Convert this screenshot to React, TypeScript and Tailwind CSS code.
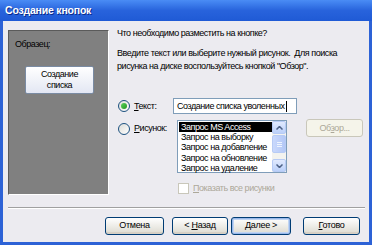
import React from "react";

const font = "font-['Liberation_Sans',Arial,sans-serif]";

const Radio = ({ checked }: { checked?: boolean }) => (
  <span className="flex h-[12px] w-[12px] items-center justify-center rounded-full border border-[#1c5180] bg-gradient-to-br from-[#dcdcd7] to-white">
    {checked && <span className="h-[6px] w-[6px] rounded-full bg-gradient-to-br from-[#5cd35c] to-[#1e961e]" />}
  </span>
);

const XpButton = ({
  children,
  width,
  isDefault,
}: {
  children: React.ReactNode;
  width: string;
  isDefault?: boolean;
}) => (
  <button
    className={`${width} h-[18px] whitespace-nowrap rounded-[3px] border border-[#003c74] bg-gradient-to-b from-white to-[#dcdad0] text-[9px] tracking-[-0.3px] text-black ${
      isDefault ? "shadow-[inset_0_0_0_1px_#98b8ea,inset_0_0_0_2px_#c0d4f2]" : "shadow-[inset_0_-2px_0_#d6d0c5]"
    }`}
  >
    {children}
  </button>
);

const items = [
  "Запрос MS Access",
  "Запрос на выборку",
  "Запрос на добавление",
  "Запрос на обновление",
  "Запрос на удаление",
];

export default function App() {
  return (
    <div className={`${font} flex h-[245px] w-[372px] flex-col overflow-hidden whitespace-nowrap bg-[#2d62d6] px-[3px] pb-[3px] text-black`}>
      {/* TITLE BAR */}
      <div className="-mx-[3px] flex h-[21px] items-center bg-gradient-to-b from-[#4a8cf5] via-[#2863dc] to-[#1f5ad5] px-[5px]">
        <span className="text-[10.5px] font-bold tracking-[-0.2px] text-white [text-shadow:1px_1px_0_#0a2a8a]">Создание кнопок</span>
      </div>

      {/* BODY */}
      <div className="flex flex-1 flex-col bg-[#ecebf0] text-[9px] tracking-[-0.45px]">
        <div className="flex pl-[5px] pt-[6px]">
          {/* Sample panel */}
          <div className="mt-[3px] flex h-[165px] w-[101px] shrink-0 flex-col border border-b-white border-l-[#5a5a5a] border-r-white border-t-[#5a5a5a] bg-[#808080]">
            <span className="ml-[6px] mt-[7px] leading-[12px]">Образец:</span>
            <div className="ml-[16px] mt-[16px] flex h-[28px] w-[69px] flex-col items-center overflow-hidden rounded-[2px] border border-[#7a8ba3] bg-gradient-to-b from-white to-[#e3e7f3] pt-[2px] leading-[11px]">
              <span>Создание</span>
              <span>списка</span>
              <span className="mt-[2px] w-[38px] border-t border-dotted border-[#777]" />
            </div>
          </div>

          {/* Right side */}
          <div className="ml-[8px] flex flex-1 flex-col leading-[12px]">
            <span>Что необходимо разместить на кнопке?</span>
            <span className="mt-[8px]">Введите текст или выберите нужный рисунок.&nbsp; Для поиска</span>
            <span className="mt-[1px]">рисунка на диске воспользуйтесь кнопкой "Обзор".</span>

            <div className="mt-[26px] flex items-center">
              <span className="ml-[1px]">
                <Radio checked />
              </span>
              <span className="ml-[4px] w-[39px]">
                <u>Т</u>екст:
              </span>
              <div className="flex h-[16px] w-[124px] items-center border border-[#7f9db9] bg-white pl-[3px]">
                Создание списка уволенных<span className="ml-[1px] h-[11px] w-[1px] bg-black" />
              </div>
            </div>

            <div className="mt-[6px] flex items-start">
              <span className="ml-[1px] mt-[3px]">
                <Radio />
              </span>
              <span className="ml-[4px] mt-[2px] w-[43px]">
                <u>Р</u>исунок:
              </span>
              <div className="flex h-[53px] w-[110px] border border-[#7f9db9] bg-white">
                <div className="flex flex-1 flex-col pl-[1px] pt-[1px] leading-[10.2px]">
                  {items.map((it, i) => (
                    <span key={it} className={i === 0 ? "bg-black pl-[2px] text-white" : "pl-[2px]"}>
                      {it}
                    </span>
                  ))}
                </div>
                <div className="flex w-[14px] flex-col bg-[#f3f3ef]">
                  <div className="flex h-[13px] items-center justify-center rounded-[2px] border border-[#b7cbf5] bg-gradient-to-b from-[#e1eafe] to-[#bbd0f9]">
                    <svg width="7" height="4" viewBox="0 0 7 4"><path d="M0.5 3.5 L3.5 0.5 L6.5 3.5" fill="none" stroke="#4d6185" strokeWidth="1.5" /></svg>
                  </div>
                  <div className="mt-[1px] flex h-[18px] items-center justify-center rounded-[2px] border border-[#b7cbf5] bg-gradient-to-r from-[#c9d8fc] to-[#b4c8f6]">
                    <div className="flex flex-col gap-[1px]">
                      <span className="h-[1px] w-[5px] bg-[#eef4fe]" />
                      <span className="h-[1px] w-[5px] bg-[#eef4fe]" />
                      <span className="h-[1px] w-[5px] bg-[#eef4fe]" />
                    </div>
                  </div>
                  <div className="flex-1" />
                  <div className="flex h-[13px] items-center justify-center rounded-[2px] border border-[#b7cbf5] bg-gradient-to-b from-[#e1eafe] to-[#bbd0f9]">
                    <svg width="7" height="4" viewBox="0 0 7 4"><path d="M0.5 0.5 L3.5 3.5 L6.5 0.5" fill="none" stroke="#4d6185" strokeWidth="1.5" /></svg>
                  </div>
                </div>
              </div>
              <div className="ml-[19px] -mt-[1px] flex h-[18px] w-[57px] items-center justify-center rounded-[3px] border border-[#c9c7ba] bg-[#f5f4ea] text-[#aca899]">
                Об<u>з</u>ор...
              </div>
            </div>

            <div className="ml-[61px] mt-[9px] flex items-center text-[#aca899]">
              <span className="h-[11px] w-[11px] border border-[#c9c7ba] bg-white" />
              <span className="ml-[4px]">
                <u>П</u>оказать все рисунки
              </span>
            </div>
          </div>
        </div>

        {/* separator */}
        <div className="ml-[5px] mr-[4px] mt-[12px] h-[2px] border-b border-t border-b-white border-t-[#a0a0a0]" />

        {/* buttons */}
        <div className="mt-[8px] flex">
          <div className="ml-[102px]">
            <XpButton width="w-[59px]">Отмена</XpButton>
          </div>
          <div className="ml-[8px]">
            <XpButton width="w-[56px]">
              &lt; <u>Н</u>азад
            </XpButton>
          </div>
          <div className="ml-[3px]">
            <XpButton width="w-[60px]" isDefault>
              <u>Д</u>алее &gt;
            </XpButton>
          </div>
          <div className="ml-[12px]">
            <XpButton width="w-[57px]">
              <u>Г</u>отово
            </XpButton>
          </div>
        </div>
      </div>
    </div>
  );
}
